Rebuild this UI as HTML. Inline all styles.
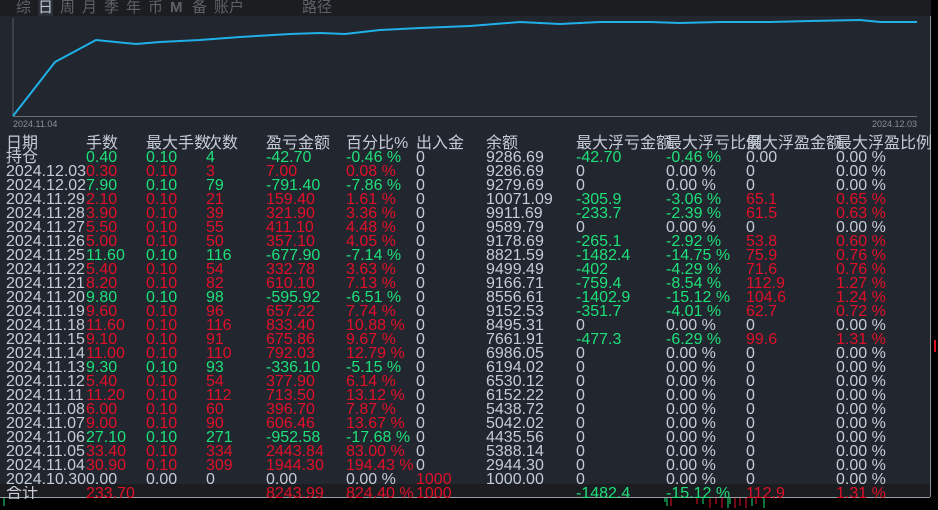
<!DOCTYPE html>
<html><head><meta charset="utf-8"><style>
*{margin:0;padding:0}
body{width:938px;height:510px;overflow:hidden;background:#000;position:relative;font-family:"Liberation Sans","Noto Sans CJK SC",sans-serif}
#top{position:absolute;left:0;top:0;width:931px;height:16px;background:#1c1d20;color:#5d6168;font-size:15px;line-height:16px}
#top span{position:absolute;top:0}
#panel{position:absolute;left:0;top:16px;width:930px;height:481px;background:#22262e;border-right:1px solid #8a8f96}
#w{position:absolute;left:0;top:2px;width:930px;height:496px}
.r{position:absolute;left:0;width:930px;height:14px;font-size:16px;line-height:16px;color:#c5ccd8}
.r span{position:absolute;top:0;white-space:nowrap}
.r span:nth-child(1){left:6px}.r span:nth-child(2){left:86px}.r span:nth-child(3){left:146px}.r span:nth-child(4){left:206px}
.r span:nth-child(5){left:266px}.r span:nth-child(6){left:346px}.r span:nth-child(7){left:416px}.r span:nth-child(8){left:486px}
.r span:nth-child(9){left:576px}.r span:nth-child(10){left:666px}.r span:nth-child(11){left:746px}.r span:nth-child(12){left:836px}
.g{color:#1ee07a}.d{color:#e0102a}
#foot{position:absolute;left:0;top:484px;width:930px;height:13px;background:#1c1d20;border-bottom:1px solid #9aa0a8}
</style></head><body>
<div id="top"><span style="left:16px">综</span><span style="left:38px;color:#c0c6d0;background:#2a2e36">日</span><span style="left:60px">周</span><span style="left:82px">月</span><span style="left:104px">季</span><span style="left:126px">年</span><span style="left:148px">币</span><span style="left:170px;font-weight:bold">M</span><span style="left:192px">备</span><span style="left:214px">账户</span><span style="left:302px">路径</span></div>
<div id="panel"></div>
<div id="foot"></div>
<svg style="position:absolute;left:0;top:0" width="938" height="510">
<line x1="13" y1="18" x2="13" y2="116" stroke="#555a62"/>
<line x1="13" y1="116.5" x2="917" y2="116.5" stroke="#6a6f77"/>
<polyline fill="none" stroke="#1fb0e8" stroke-width="2" points="13,116 55,62 96,40 136,44 160,42 200,40 240,37 290,34 320,33 345,34 380,30 420,28 470,26 520,22 560,24 600,22 650,22 680,23 720,22 770,22 810,21 860,20 880,22 917,22"/>
<text x="13" y="127" font-size="9" fill="#8a9099" font-family="Liberation Sans">2024.11.04</text>
<text x="872" y="127" font-size="9" fill="#8a9099" font-family="Liberation Sans">2024.12.03</text>
<path d="M935 340v12" stroke="#e0102a" stroke-width="2"/>
<g stroke="#1ee07a"><path d="M4 498v8M665 498v4M667 498v8M703 498v6M728 498v10M730 498v6M752 498v8M764 498v10"/></g>
<g stroke="#e0102a"><path d="M671 498v8M697 498v6M710 498v10M716 498v6M722 498v10M735 498v10M740 498v8M746 498v10M756 498v6"/></g>
</svg>
<div id="w">
<div class="r" style="top:134px"><span>日期</span><span>手数</span><span>最大手数</span><span style="left:206px">次数</span><span>盈亏金额</span><span>百分比%</span><span>出入金</span><span>余额</span><span>最大浮亏金额</span><span>最大浮亏比例</span><span>最大浮盈金额</span><span>最大浮盈比例</span></div>
<div class="r" style="top:148px"><span>持仓</span><span class="g">0.40</span><span class="g">0.10</span><span class="g">4</span><span class="g">-42.70</span><span class="g">-0.46 %</span><span>0</span><span>9286.69</span><span class="g">-42.70</span><span class="g">-0.46 %</span><span>0.00</span><span>0.00 %</span></div>
<div class="r" style="top:162px"><span>2024.12.03</span><span class="d">0.30</span><span class="d">0.10</span><span class="d">3</span><span class="d">7.00</span><span class="d">0.08 %</span><span>0</span><span>9286.69</span><span>0</span><span>0.00 %</span><span>0</span><span>0.00 %</span></div>
<div class="r" style="top:176px"><span>2024.12.02</span><span class="g">7.90</span><span class="g">0.10</span><span class="g">79</span><span class="g">-791.40</span><span class="g">-7.86 %</span><span>0</span><span>9279.69</span><span>0</span><span>0.00 %</span><span>0</span><span>0.00 %</span></div>
<div class="r" style="top:190px"><span>2024.11.29</span><span class="d">2.10</span><span class="d">0.10</span><span class="d">21</span><span class="d">159.40</span><span class="d">1.61 %</span><span>0</span><span>10071.09</span><span class="g">-305.9</span><span class="g">-3.06 %</span><span class="d">65.1</span><span class="d">0.65 %</span></div>
<div class="r" style="top:204px"><span>2024.11.28</span><span class="d">3.90</span><span class="d">0.10</span><span class="d">39</span><span class="d">321.90</span><span class="d">3.36 %</span><span>0</span><span>9911.69</span><span class="g">-233.7</span><span class="g">-2.39 %</span><span class="d">61.5</span><span class="d">0.63 %</span></div>
<div class="r" style="top:218px"><span>2024.11.27</span><span class="d">5.50</span><span class="d">0.10</span><span class="d">55</span><span class="d">411.10</span><span class="d">4.48 %</span><span>0</span><span>9589.79</span><span>0</span><span>0.00 %</span><span>0</span><span>0.00 %</span></div>
<div class="r" style="top:232px"><span>2024.11.26</span><span class="d">5.00</span><span class="d">0.10</span><span class="d">50</span><span class="d">357.10</span><span class="d">4.05 %</span><span>0</span><span>9178.69</span><span class="g">-265.1</span><span class="g">-2.92 %</span><span class="d">53.8</span><span class="d">0.60 %</span></div>
<div class="r" style="top:246px"><span>2024.11.25</span><span class="g">11.60</span><span class="g">0.10</span><span class="g">116</span><span class="g">-677.90</span><span class="g">-7.14 %</span><span>0</span><span>8821.59</span><span class="g">-1482.4</span><span class="g">-14.75 %</span><span class="d">75.9</span><span class="d">0.76 %</span></div>
<div class="r" style="top:260px"><span>2024.11.22</span><span class="d">5.40</span><span class="d">0.10</span><span class="d">54</span><span class="d">332.78</span><span class="d">3.63 %</span><span>0</span><span>9499.49</span><span class="g">-402</span><span class="g">-4.29 %</span><span class="d">71.6</span><span class="d">0.76 %</span></div>
<div class="r" style="top:274px"><span>2024.11.21</span><span class="d">8.20</span><span class="d">0.10</span><span class="d">82</span><span class="d">610.10</span><span class="d">7.13 %</span><span>0</span><span>9166.71</span><span class="g">-759.4</span><span class="g">-8.54 %</span><span class="d">112.9</span><span class="d">1.27 %</span></div>
<div class="r" style="top:288px"><span>2024.11.20</span><span class="g">9.80</span><span class="g">0.10</span><span class="g">98</span><span class="g">-595.92</span><span class="g">-6.51 %</span><span>0</span><span>8556.61</span><span class="g">-1402.9</span><span class="g">-15.12 %</span><span class="d">104.6</span><span class="d">1.24 %</span></div>
<div class="r" style="top:302px"><span>2024.11.19</span><span class="d">9.60</span><span class="d">0.10</span><span class="d">96</span><span class="d">657.22</span><span class="d">7.74 %</span><span>0</span><span>9152.53</span><span class="g">-351.7</span><span class="g">-4.01 %</span><span class="d">62.7</span><span class="d">0.72 %</span></div>
<div class="r" style="top:316px"><span>2024.11.18</span><span class="d">11.60</span><span class="d">0.10</span><span class="d">116</span><span class="d">833.40</span><span class="d">10.88 %</span><span>0</span><span>8495.31</span><span>0</span><span>0.00 %</span><span>0</span><span>0.00 %</span></div>
<div class="r" style="top:330px"><span>2024.11.15</span><span class="d">9.10</span><span class="d">0.10</span><span class="d">91</span><span class="d">675.86</span><span class="d">9.67 %</span><span>0</span><span>7661.91</span><span class="g">-477.3</span><span class="g">-6.29 %</span><span class="d">99.6</span><span class="d">1.31 %</span></div>
<div class="r" style="top:344px"><span>2024.11.14</span><span class="d">11.00</span><span class="d">0.10</span><span class="d">110</span><span class="d">792.03</span><span class="d">12.79 %</span><span>0</span><span>6986.05</span><span>0</span><span>0.00 %</span><span>0</span><span>0.00 %</span></div>
<div class="r" style="top:358px"><span>2024.11.13</span><span class="g">9.30</span><span class="g">0.10</span><span class="g">93</span><span class="g">-336.10</span><span class="g">-5.15 %</span><span>0</span><span>6194.02</span><span>0</span><span>0.00 %</span><span>0</span><span>0.00 %</span></div>
<div class="r" style="top:372px"><span>2024.11.12</span><span class="d">5.40</span><span class="d">0.10</span><span class="d">54</span><span class="d">377.90</span><span class="d">6.14 %</span><span>0</span><span>6530.12</span><span>0</span><span>0.00 %</span><span>0</span><span>0.00 %</span></div>
<div class="r" style="top:386px"><span>2024.11.11</span><span class="d">11.20</span><span class="d">0.10</span><span class="d">112</span><span class="d">713.50</span><span class="d">13.12 %</span><span>0</span><span>6152.22</span><span>0</span><span>0.00 %</span><span>0</span><span>0.00 %</span></div>
<div class="r" style="top:400px"><span>2024.11.08</span><span class="d">6.00</span><span class="d">0.10</span><span class="d">60</span><span class="d">396.70</span><span class="d">7.87 %</span><span>0</span><span>5438.72</span><span>0</span><span>0.00 %</span><span>0</span><span>0.00 %</span></div>
<div class="r" style="top:414px"><span>2024.11.07</span><span class="d">9.00</span><span class="d">0.10</span><span class="d">90</span><span class="d">606.46</span><span class="d">13.67 %</span><span>0</span><span>5042.02</span><span>0</span><span>0.00 %</span><span>0</span><span>0.00 %</span></div>
<div class="r" style="top:428px"><span>2024.11.06</span><span class="g">27.10</span><span class="g">0.10</span><span class="g">271</span><span class="g">-952.58</span><span class="g">-17.68 %</span><span>0</span><span>4435.56</span><span>0</span><span>0.00 %</span><span>0</span><span>0.00 %</span></div>
<div class="r" style="top:442px"><span>2024.11.05</span><span class="d">33.40</span><span class="d">0.10</span><span class="d">334</span><span class="d">2443.84</span><span class="d">83.00 %</span><span>0</span><span>5388.14</span><span>0</span><span>0.00 %</span><span>0</span><span>0.00 %</span></div>
<div class="r" style="top:456px"><span>2024.11.04</span><span class="d">30.90</span><span class="d">0.10</span><span class="d">309</span><span class="d">1944.30</span><span class="d">194.43 %</span><span>0</span><span>2944.30</span><span>0</span><span>0.00 %</span><span>0</span><span>0.00 %</span></div>
<div class="r" style="top:470px;height:12px;overflow:hidden"><span>2024.10.30</span><span>0.00</span><span>0.00</span><span>0</span><span>0.00</span><span>0.00 %</span><span class="d">1000</span><span>1000.00</span><span>0</span><span>0.00 %</span><span>0</span><span>0.00 %</span></div>
<div class="r" style="top:484px;height:13px;overflow:hidden"><span>合计</span><span class="d">233.70</span><span></span><span></span><span class="d">8243.99</span><span class="d">824.40 %</span><span class="d">1000</span><span></span><span class="g">-1482.4</span><span class="g">-15.12 %</span><span class="d">112.9</span><span class="d">1.31 %</span></div>
</div>
</body></html>
